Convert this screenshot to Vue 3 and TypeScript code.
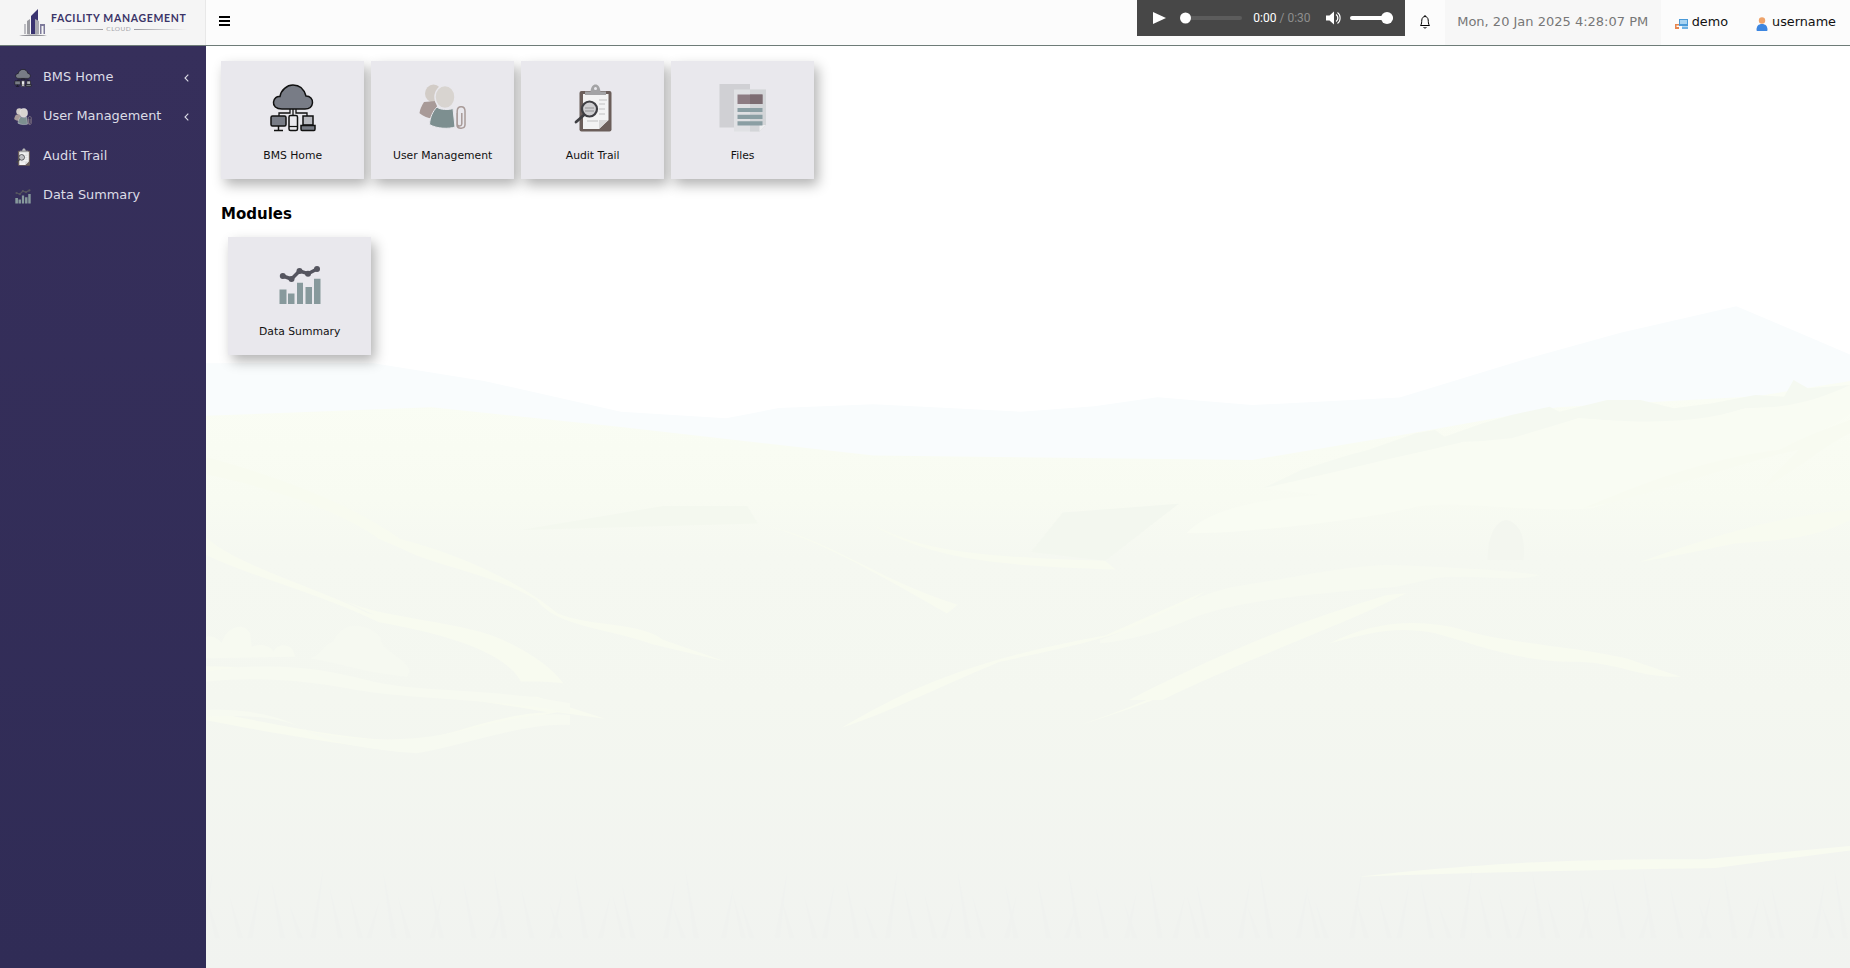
<script setup lang="ts">
interface Tile {
  title: string
  icon: string
}

interface NavItem extends Tile {
  sub?: boolean
}

const navItems: NavItem[] = [
  { title: 'BMS Home', icon: '#i-bms', sub: true },
  { title: 'User Management', icon: '#i-users', sub: true },
  { title: 'Audit Trail', icon: '#i-audit' },
  { title: 'Data Summary', icon: '#i-data' }
]

const tiles: Tile[] = [
  { title: 'BMS Home', icon: '#i-bms' },
  { title: 'User Management', icon: '#i-users' },
  { title: 'Audit Trail', icon: '#i-audit' },
  { title: 'Files', icon: '#i-files' }
]

const modules: Tile[] = [{ title: 'Data Summary', icon: '#i-data' }]

// light bands on the hills, drawn in a 1568 x 1568 box
const ridges: string[] = [
  'M0 400C80 450 150 520 190 590C240 620 300 680 340 760C370 790 420 780 440 820L500 870L430 830C380 790 340 790 320 730C280 670 220 650 190 610L170 590C130 520 60 470 0 440Z',
  'M0 570C20 640 100 690 160 760C240 790 300 840 340 915L305 915C290 850 240 810 170 780C110 710 40 670 0 620Z',
  'M0 880C100 880 170 950 320 950L385 1000L340 985C280 1010 230 1075 190 1075C140 1060 60 1030 0 1000L0 980C70 1010 140 1050 200 1050C240 1040 280 990 330 985C270 960 120 900 0 905Z',
  'M530 555C600 590 640 680 720 740L710 760C650 680 590 590 530 555Z',
  'M640 560C680 600 700 630 860 640L870 660C760 650 700 640 640 560Z',
  'M610 1020C660 950 720 870 860 810L955 710C900 800 840 830 760 870C700 930 650 990 610 1020Z',
  'M835 1015C920 950 1000 840 1120 730C1020 840 950 930 835 1015Z',
  'M1100 1360C1250 1320 1340 1320 1430 1320L1568 1290V1300L1440 1340C1320 1345 1210 1350 1100 1360Z'
]

// grass along the bottom edge, spaced by hand-picked steps
const grassSteps = [14, 22, 9, 31, 17, 12, 26, 19, 8, 24]
const grassBlades: string[] = []
let grassX = 0
let grassIndex = 0
while (grassX < 1568) {
  const step = grassSteps[grassIndex % grassSteps.length]
  const lean = grassIndex % 3 === 0 ? 12 : -8
  const top = 1340 + (step * 7) % 90
  grassBlades.push(`M${grassX} 1500L${grassX + lean} ${top}L${grassX + 5} 1500Z`)
  grassX += step
  grassIndex++
}
</script>

<template>
  <div class="shell">
    <svg class="defs" width="0" height="0" aria-hidden="true">
      <symbol id="i-bms" viewBox="0 0 48 48">
        <path d="M13 25C7 25 4 22 4.500 18C5 14 8 12 11 12.500C12 6 18 1 24 1C30 1 35 5 37 12C41 12 44 15 43.500 19C43 23 40 25 36 25Z" fill="#787c86" stroke="#111" stroke-width="1.500" />
        <path d="M21 25V29H10V32M24 25V32M27 25V29H38V32" fill="none" stroke="#111" stroke-width="1.300" />
        <rect x="2" y="32" width="15" height="10" rx="1.500" fill="#787c86" stroke="#111" stroke-width="1.500" />
        <path d="M9.500 42V46M5 46.500H14" stroke="#111" stroke-width="1.500" />
        <rect x="20" y="31.500" width="8.500" height="15" rx="1.500" fill="#e9e8ed" stroke="#111" stroke-width="1.500" />
        <path d="M20 42.500H28.500" stroke="#111" stroke-width="1.200" />
        <path d="M34 32H44V41H34Z" fill="#b9bac0" stroke="#111" stroke-width="1.500" />
        <path d="M32 41.500H46V45C46 46 45.500 46.500 45 46.500H33C32.500 46.500 32 46 32 45Z" fill="#787c86" stroke="#111" stroke-width="1.500" />
      </symbol>
      <symbol id="i-users" viewBox="0 0 48 48">
        <ellipse cx="14.500" cy="9.500" rx="8.500" ry="9" fill="#d2ccc7" />
        <path d="M5 18L17 17L20 35L10 34C6 33 1 30 0.500 29C1 25 3 21 5 18Z" fill="#a89a98" />
        <ellipse cx="26" cy="13" rx="10" ry="11.500" fill="#d8d4d0" stroke="#e9e8ed" stroke-width="1.500" />
        <path d="M18 23C21 26 30 26 34 24.500L36 43C30 45 18 45 10.500 40.500C11 33 14 27 18 23Z" fill="#7d8f90" stroke="#e9e8ed" stroke-width="1" />
        <path d="M38 29V41C38 45 45.500 45.500 46 41V27C46 21.500 38.500 21 38.200 27V40C38.500 42.500 42.500 42.500 42.800 40V29" fill="none" stroke="#a89a98" stroke-width="1.500" />
      </symbol>
      <symbol id="i-audit" viewBox="0 0 48 48">
        <rect x="10.500" y="7" width="32" height="40.500" rx="2" fill="#6b5e5a" />
        <path d="M14 10H39.500V36L30 45H14Z" fill="#f3f3f3" />
        <path d="M30 45V36H39.500Z" fill="#d8d8d8" />
        <path d="M16 11V7.500H21.500C22 3 24 0.500 26.500 0.500C29 0.500 31 3 31.500 7.500H37V11Z" fill="#a3a3a5" />
        <circle cx="26.500" cy="4.500" r="1.500" fill="#e9e8ed" />
        <path d="M30 16H38M30 20H36M30 25H36M30 30H36M18 37H29" stroke="#d2d2d2" stroke-width="1.500" />
        <circle cx="20.500" cy="25" r="7.500" fill="#cfcfd1" stroke="#3f3f43" stroke-width="2.200" />
        <path d="M16 24H25M16 27H25" stroke="#a9a9ab" stroke-width="1.500" />
        <path d="M15 31L7 38" stroke="#3f3f43" stroke-width="2.800" stroke-linecap="round" />
      </symbol>
      <symbol id="i-files" viewBox="0 0 48 48">
        <rect x="0.500" y="0" width="30.500" height="43.500" fill="#d0d0d4" />
        <path d="M15 5.500H47V41L40.500 47.500H15Z" fill="#e0e1e4" />
        <path d="M31 5.500H47V41L40.500 47.500H31Z" fill="#d3d5d8" />
        <path d="M40.500 47.500V41H47Z" fill="#eeeef0" />
        <rect x="18.500" y="10.500" width="25" height="9.500" fill="#8d7c83" />
        <rect x="31" y="10.500" width="12.500" height="9.500" fill="#7c6c72" />
        <path d="M18.500 26H43.500M18.500 32.800H43.500M18.500 39.400H43.500" stroke="#8a9ea3" stroke-width="4.200" />
      </symbol>
      <symbol id="i-data" viewBox="0 0 48 48">
        <path d="M3.500 29.500H10.500V44H3.500ZM12 33.500H18.500V44H12ZM21 22.700H27V44H21ZM29.500 27H36V44H29.500ZM38 18.700H44.500V44H38Z" fill="#87999c" />
        <path d="M6.800 16L15.500 19L23.500 11L32 13.700L41 9" fill="none" stroke="#55555f" stroke-width="3.500" stroke-linecap="round" stroke-linejoin="round" />
        <g fill="#55555f">
          <circle cx="6.800" cy="16" r="3" />
          <circle cx="15.500" cy="19" r="3" />
          <circle cx="23.500" cy="11" r="3" />
          <circle cx="32" cy="13.700" r="3" />
          <circle cx="41" cy="9" r="3" />
        </g>
      </symbol>
    </svg>

    <header class="topbar">
      <div class="brand">
        <svg class="brand-mark" viewBox="0 0 30 28" width="30" height="28">
          <path d="M8 25V12L11 10V25Z" fill="#9a9aa0" />
          <path d="M12 25V7L19 0V25Z" fill="#3a3470" />
          <path d="M16 25V10L20 12V25Z" fill="#a9a9b0" />
          <path d="M21 25V15H26V25H24.500V17H22.500V25Z" fill="#7d7a9a" />
          <path d="M5 25V15H7V25Z" fill="#bdbdc2" />
          <path d="M0 27C8 25 20 25 28 27Z" fill="#8f8f95" />
        </svg>
        <div class="brand-text">
          <div class="brand-name">FACILITY MANAGEMENT</div>
          <div class="brand-sub"><i></i><span>CLOUD</span><i></i></div>
        </div>
      </div>
      <button class="burger" type="button" aria-label="Toggle menu"><span></span><span></span><span></span></button>

      <div class="top-right">
        <div class="player">
          <span class="play"></span>
          <div class="seek"><span class="knob"></span></div>
          <div class="time">0:00 <em>/ 0:30</em></div>
          <svg class="speaker" viewBox="0 0 16 14" width="16" height="14">
            <path d="M0 4.500H3.500L8 0.500V13.500L3.500 9.500H0Z" fill="#fff" />
            <path d="M10 3.500C12.500 5 12.500 9 10 10.500" fill="none" stroke="#fff" stroke-width="1.300" />
            <path d="M11.500 1.500C15 4 15 10 11.500 12.500" fill="none" stroke="#fff" stroke-width="1.100" />
          </svg>
          <div class="volume"><span class="vol-knob"></span></div>
        </div>
        <svg class="bell" viewBox="0 0 12 14" width="12" height="14">
          <path d="M1.500 10.500C2.800 9 2.600 7 2.800 5C3 2.800 4.300 1.500 6 1.500C7.700 1.500 9 2.800 9.200 5C9.400 7 9.200 9 10.500 10.500Z" fill="none" stroke="#000" stroke-width="1" stroke-linejoin="round" />
          <path d="M4.500 12.200C5 13.300 7 13.300 7.500 12.200M6 0V1.500" fill="none" stroke="#000" stroke-width="1" />
        </svg>
        <div class="clock">Mon, 20 Jan 2025 4:28:07 PM</div>
        <a class="top-link demo">
          <svg viewBox="0 0 13 12" width="13" height="12">
            <path d="M4 1H13V8H4Z" fill="#4a9ad8" />
            <path d="M5 2H12V6H5Z" fill="#a8d4f2" />
            <path d="M7 8.500H13V11H7Z" fill="#6fb2e4" />
            <path d="M0 6H4V7.500H1.500V9H4V11H0Z" fill="#e8864e" />
          </svg>
          demo
        </a>
        <a class="top-link user">
          <svg viewBox="0 0 12 14" width="12" height="14">
            <circle cx="6" cy="3.500" r="3.200" fill="#eea36a" />
            <path d="M0.500 13C0.500 9 2.500 7 6 7C9.500 7 11.500 9 11.500 13C11.500 13.600 11 14 10.500 14H1.500C1 14 0.500 13.600 0.500 13Z" fill="#3d86e0" />
          </svg>
          username
        </a>
      </div>
    </header>

    <div class="body-row">
      <aside class="sidebar">
        <a v-for="item in navItems" :key="item.title" class="nav-item">
          <svg class="nav-icon"><use :href="item.icon" /></svg>
          <span class="nav-label">{{ item.title }}</span>
          <svg v-if="item.sub" class="nav-caret" viewBox="0 0 5 8" width="5" height="8">
            <path d="M4.300 0.700L1 4L4.300 7.300" fill="none" stroke="#dcdce6" stroke-width="1.100" />
          </svg>
        </a>
      </aside>

      <main class="content">
        <svg class="scenery" viewBox="0 0 1568 1568" preserveAspectRatio="none" aria-hidden="true">
          <defs>
            <linearGradient id="hill-fill" x1="0" y1="0" x2="0" y2="1">
              <stop offset="0.03" stop-color="#fafdf4" />
              <stop offset="0.2" stop-color="#f8fbf2" />
              <stop offset="0.3" stop-color="#f5f8f1" />
              <stop offset="0.54" stop-color="#f4f7f0" />
              <stop offset="1" stop-color="#f1f3f0" />
            </linearGradient>
          </defs>
          <path d="M0 190L165 190L270 230L400 300L500 315L550 292L640 283L780 300L850 288L910 267L1000 285L1140 268L1260 180L1350 120L1460 60L1500 100L1568 170V500H0Z" fill="#f9fcfd" />
          <path d="M0 310L220 290L400 335L640 400L1000 410L1150 350L1290 290L1480 265L1568 230V1568H0Z" fill="url(#hill-fill)" />
          <path d="M790 620L820 530L930 510L860 640Z" fill="#f3f7ef" />
          <path d="M305 570L440 515L520 515L530 555Z" fill="#f4f8ef" />
          <path v-for="(d, i) in ridges" :key="i" :d="d" fill="#f8fbf0" />

          <!-- right hills, traced in the crop at 1100,300 -->
          <g transform="matrix(.4544 0 0 .7597 855.500 45.600)">
            <path d="M340 565L420 510L520 465L560 450L660 400L700 390L720 410L800 370L860 345L940 320L960 335L1060 300L1130 300L1200 325L1280 310L1370 285L1430 290L1450 240L1480 265L1568 255V300L1440 320L1350 325L1230 372L1100 365L1000 355L860 420L760 425L600 480Z" fill="#f5f9f1" />
            <path d="M340 565C500 520 700 430 860 415L1000 355C1100 365 1230 380 1350 325C1440 325 1500 300 1568 255V340C1500 420 1350 470 1030 625C900 640 760 600 660 620C560 660 300 700 180 700C220 640 300 600 460 585Z" fill="#f9fcf3" />
            <path d="M0 1020C100 970 180 890 280 860C420 830 500 800 600 795C720 800 850 810 920 825C860 850 780 820 700 835L620 860C450 880 300 900 200 950C120 1000 60 1020 0 1030Z" fill="#f7faf1" />
            <path d="M60 1200C250 1060 420 960 600 885L640 880C500 980 300 1080 130 1200Z" fill="#f8fbf0" />
            <path d="M480 1030C560 970 660 950 760 990C850 1030 1000 1040 1100 1075C1150 1100 1190 1120 1215 1130C1130 1135 1090 1090 1000 1085C880 1090 780 1030 700 1000C620 975 560 1000 480 1030Z" fill="#f8fbf0" />
            <path d="M1130 785C1260 720 1400 650 1568 630V660C1500 710 1440 720 1330 730C1260 750 1200 770 1130 785Z" fill="#f8fbf0" />
            <path d="M1010 625C1180 520 1300 470 1420 450C1470 410 1530 380 1568 360V400C1500 450 1470 500 1390 560C1420 500 1450 470 1460 450C1350 480 1150 590 1010 625Z" fill="#f8fbf1" />
            <path d="M810 780C810 700 830 660 850 660C880 670 890 720 885 780Z" fill="#f3f6ef" />
          </g>

          <!-- lower left hills, traced in the crop at 150,600 -->
          <g transform="matrix(.3168 0 0 .7597 -47.500 729.300)">
            <path d="M168 215C350 185 500 200 650 240C800 280 1000 260 1260 310V340C1100 300 800 300 620 270C450 240 330 230 168 245Z" fill="#f7faf1" />
            <path d="M168 330C350 325 430 370 480 395C600 420 750 430 900 400C1050 365 1150 335 1260 345V375C1130 365 950 435 800 460C650 450 500 420 460 385C380 350 300 345 168 350Z" fill="#f7faf1" />
            <path d="M168 175L168 110C190 105 210 120 215 130C225 85 280 60 300 100L305 140C330 130 360 135 370 155C385 125 430 130 435 170Z" fill="#f7faf1" />
            <path d="M480 175C510 170 520 130 550 125C570 70 640 60 690 110C690 140 720 150 740 170C770 190 790 210 770 230C650 220 570 190 480 175Z" fill="#f6f9f1" />
            <path d="M580 0C700 60 950 60 1080 130C1160 170 1210 210 1240 250L1130 240C1050 150 900 100 740 70C680 50 620 20 580 0Z" fill="#f8fbf0" />
          </g>

          <path v-for="(d, i) in grassBlades" :key="'g' + i" :d="d" fill="#f0f2ef" />
        </svg>

        <section class="tile-row">
          <a v-for="t in tiles" :key="t.title" class="tile">
            <svg class="tile-icon"><use :href="t.icon" /></svg>
            <span class="tile-label">{{ t.title }}</span>
          </a>
        </section>

        <h2 class="section-title">Modules</h2>

        <section class="tile-row module-row">
          <a v-for="t in modules" :key="t.title" class="tile">
            <svg class="tile-icon"><use :href="t.icon" /></svg>
            <span class="tile-label">{{ t.title }}</span>
          </a>
        </section>
      </main>
    </div>
  </div>
</template>

<style>
html,
body {
  margin: 0;
  height: 100%;
  overflow: hidden;
}
</style>

<style scoped>
.shell {
  height: 100vh;
  display: flex;
  flex-direction: column;
  font-family: "DejaVu Sans", sans-serif;
  background: #fff;
}

.defs {
  position: absolute;
}

.topbar {
  flex: 0 0 46px;
  box-sizing: border-box;
  display: flex;
  align-items: flex-start;
  background: #fcfcfc;
  border-bottom: 1px solid #6e7c78;
}

.brand {
  width: 206px;
  height: 45px;
  box-sizing: border-box;
  flex: none;
  display: flex;
  align-items: flex-start;
  gap: 2px;
  padding: 9px 0 0 19px;
  background: #f5f5f5;
  border-right: 1px solid #e8e8e8;
}

.brand-text {
  padding-top: 4px;
}

.brand-name {
  font-family: Lato, sans-serif;
  font-weight: 700;
  font-size: 10.500px;
  line-height: 11px;
  letter-spacing: 0.68px;
  color: #3b3468;
  white-space: nowrap;
}

.brand-sub {
  display: flex;
  align-items: center;
  justify-content: center;
  gap: 3px;
  margin-top: 1px;
  font-family: Lato, sans-serif;
  font-size: 6.500px;
  line-height: 8px;
  letter-spacing: 0.5px;
  color: #a3a3a8;
}

.brand-sub i {
  flex: 1;
  height: 1px;
  background: linear-gradient(90deg, #f5f5f5, #9a9a9f);
}

.brand-sub i:last-child {
  background: linear-gradient(90deg, #9a9a9f, #f5f5f5);
}

.burger {
  display: flex;
  flex-direction: column;
  gap: 2px;
  margin: 16px 0 0 13px;
  padding: 0;
  border: 0;
  background: none;
}

.burger span {
  display: block;
  width: 11px;
  height: 2px;
  background: #000;
}

.top-right {
  margin-left: auto;
  display: flex;
  align-items: flex-start;
}

.player {
  width: 268px;
  height: 36px;
  box-sizing: border-box;
  display: flex;
  align-items: center;
  padding-left: 16px;
  background: #474747;
  color: #fff;
}

.play {
  width: 0;
  height: 0;
  border-left: 13px solid #fff;
  border-top: 6.500px solid transparent;
  border-bottom: 6.500px solid transparent;
}

.seek {
  position: relative;
  width: 57px;
  height: 4px;
  margin-left: 19px;
  border-radius: 2px;
  background: #5c5c5c;
}

.knob,
.vol-knob {
  position: absolute;
  top: 50%;
  border-radius: 50%;
  background: #fff;
  transform: translateY(-50%);
}

.knob {
  left: -5px;
  width: 11px;
  height: 11px;
}

.time {
  margin-left: 11px;
  font-family: Roboto, sans-serif;
  font-size: 12px;
  white-space: nowrap;
}

.time em {
  font-style: normal;
  color: #8e8e8e;
}

.speaker {
  margin-left: 15px;
}

.volume {
  position: relative;
  width: 43px;
  height: 4px;
  margin-left: 8px;
  border-radius: 2px;
  background: #fff;
}

.vol-knob {
  right: 0;
  width: 12px;
  height: 12px;
}

.bell {
  margin: 15px 13.400px 0 14px;
}

.clock {
  box-sizing: border-box;
  width: 216px;
  height: 45px;
  padding-top: 14px;
  text-align: center;
  font-size: 13px;
  line-height: 16px;
  color: #777;
  background: #f7f7f7;
}

.top-link {
  display: flex;
  align-items: center;
  gap: 4px;
  height: 45px;
  padding-bottom: 2px;
  box-sizing: border-box;
  font-size: 12.800px;
  color: #111;
}

.demo {
  margin-left: 14px;
}

.demo svg {
  margin-top: 4px;
}

.user {
  margin-left: 28px;
  margin-right: 14px;
}

.user svg {
  margin-top: 4px;
}

.body-row {
  flex: 1;
  display: flex;
  min-height: 0;
}

.sidebar {
  flex: 0 0 206px;
  box-sizing: border-box;
  padding-top: 11px;
  background: linear-gradient(180deg, #362f5b, #302c56);
}

.nav-item {
  display: flex;
  align-items: center;
  height: 39.300px;
  padding: 0 17px 0 14px;
  font-size: 12.900px;
  color: #dcdce6;
}

.nav-icon {
  flex: none;
  width: 18px;
  height: 18px;
  margin-top: 3px;
}

.nav-label {
  flex: 1;
  margin-left: 11px;
  white-space: nowrap;
}

.nav-caret {
  margin-top: 3px;
}

.content {
  position: relative;
  flex: 1;
  overflow: hidden;
  box-sizing: border-box;
  padding: 15px;
}

.scenery {
  position: absolute;
  left: -6px;
  top: 234px;
  width: 1650px;
  height: 688px;
}

.tile-row {
  position: relative;
  display: flex;
  gap: 6.600px;
}

.module-row {
  margin-left: 7px;
}

.tile {
  box-sizing: border-box;
  width: 143.400px;
  height: 117.500px;
  display: flex;
  flex-direction: column;
  align-items: center;
  padding-top: 23px;
  background: #e9e8ed;
  box-shadow: 4px 6px 12px rgba(0, 0, 0, 0.3);
}

.tile-icon {
  width: 48px;
  height: 48px;
}

.tile-label {
  margin-top: 16px;
  font-size: 10.800px;
  line-height: 16px;
  color: #111;
  white-space: nowrap;
}

.section-title {
  position: relative;
  margin: 25px 0 13.500px;
  font-size: 15px;
  line-height: 20px;
  font-weight: 700;
  color: #000;
}
</style>
